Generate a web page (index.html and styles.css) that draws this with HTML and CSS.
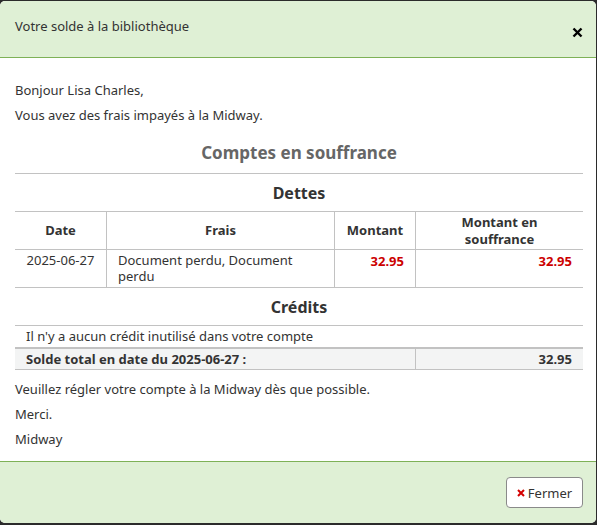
FILE: index.html
```html
<!DOCTYPE html>
<html lang="fr">
<head>
<meta charset="utf-8">
<title>Votre solde</title>
<link rel="stylesheet" href="styles.css">
</head>
<body>
<div class="modal">
  <div class="modal-header">
    <h1 class="modal-title">Votre solde à la bibliothèque</h1>
    <button class="close" type="button" aria-label="Fermer">
      <svg width="11" height="11" viewBox="0 0 11 11"><path d="M1.5 1.5 L9.5 9.5 M9.5 1.5 L1.5 9.5" stroke="#000" stroke-width="2.4" stroke-linecap="butt"/></svg>
    </button>
  </div>
  <div class="modal-body">
    <p>Bonjour Lisa Charles,</p>
    <p>Vous avez des frais impayés à la Midway.</p>
    <h2 class="accounts-title">Comptes en souffrance</h2>
    <table class="fines">
      <tr><th colspan="4" class="section">Dettes</th></tr>
      <tr class="head">
        <th class="c-date">Date</th>
        <th class="c-frais">Frais</th>
        <th class="c-amt">Montant</th>
        <th class="c-out">Montant en<br>souffrance</th>
      </tr>
      <tr class="data">
        <td class="center">2025-06-27</td>
        <td>Document perdu, Document perdu</td>
        <td class="amount debit">32.95</td>
        <td class="amount debit">32.95</td>
      </tr>
      <tr><th colspan="4" class="section">Crédits</th></tr>
      <tr class="note"><td colspan="4">Il n'y a aucun crédit inutilisé dans votre compte</td></tr>
      <tr class="total">
        <td colspan="3">Solde total en date du 2025-06-27 :</td>
        <td class="amount">32.95</td>
      </tr>
    </table>
    <p class="after">Veuillez régler votre compte à la Midway dès que possible.</p>
    <p>Merci.</p>
    <p>Midway</p>
  </div>
  <div class="modal-footer">
    <button class="btn" type="button"><svg class="x" width="8" height="8" viewBox="0 0 8 8"><path d="M1 1 L7 7 M7 1 L1 7" stroke="#d40000" stroke-width="2"/></svg>Fermer</button>
  </div>
</div>
</body>
</html>
```
FILE: styles.css
```css
html, body {
  margin: 0;
  padding: 0;
  background: #2b2b2b;
}
body {
  font-family: "Noto Sans", "Open Sans", sans-serif;
  font-size: 13px;
  color: #333;
  padding: 1px 1px 2px 0;
}
.modal {
  background: #fff;
  border-radius: 5px;
  overflow: hidden;
  height: 522px;
  display: flex;
  flex-direction: column;
}
.modal-header {
  background: #dff0d5;
  border-bottom: 1px solid #7eb157;
  height: 56px;
  display: flex;
  align-items: flex-start;
  justify-content: space-between;
  padding: 0 15px;
}
.modal-title {
  font-size: 13px;
  font-weight: normal;
  margin: 16px 0 0;
  line-height: 18px;
}
.close {
  border: 0;
  background: none;
  padding: 0;
  margin: 26px -2px 0 0;
  width: 11px;
  height: 11px;
  display: flex;
}
.modal-body {
  flex: 1;
  padding: 23px 13px 0 15px;
}
.modal-body p {
  margin: 0 0 7px;
  line-height: 18px;
}
.accounts-title {
  text-align: center;
  color: #666;
  font-size: 17px;
  font-weight: bold;
  margin: 17px 0 8px;
  line-height: 24px;
}
.fines {
  width: 100%;
  border-collapse: collapse;
  margin-bottom: 10px;
}
.fines th, .fines td {
  border: 1px solid #c2c2c2;
  line-height: 16px;
}
.fines tr > :first-child { border-left: 0; }
.fines tr > :last-child { border-right: 0; }
.fines th.section {
  font-size: 16px;
  height: 37px;
  padding: 0;
  text-align: center;
  line-height: 20px;
}
.head th {
  height: 37px;
  padding: 0 8px;
  text-align: center;
  line-height: 17px;
}
.c-date { width: 75px; }
.c-amt { width: 64px; }
.c-out { width: 151px; }
.data td {
  height: 33px;
  padding: 2px 11px 1px;
  vertical-align: top;
}
.data td.center { text-align: center; padding-left: 8px; padding-right: 8px; }
.amount { text-align: right; font-weight: bold; }
.data td.amount { padding-right: 11px; padding-top: 3px; }
.debit { color: #cc0000; }
.note td {
  padding: 2px 11px 3px;
  height: 16px;
}
.total td {
  background: #f3f4f4;
  border-top: 2px solid #c2c2c2;
  font-weight: bold;
  padding: 2px 11px 2px;
  height: 16px;
}
.after { margin-top: 0; }
.modal-footer {
  background: #dff0d5;
  border-top: 1px solid #7eb157;
  height: 61px;
  display: flex;
  align-items: flex-start;
  justify-content: flex-end;
  padding: 0 13px 0 0;
}
.btn {
  margin-top: 15px;
  height: 31px;
  width: 77px;
  background: #fff;
  border: 1px solid #8a8a8a;
  border-radius: 4px;
  font-family: inherit;
  font-size: 13px;
  color: #333;
  display: flex;
  align-items: center;
  justify-content: center;
  padding: 0;
}
.x {
  margin-right: 3px;
  flex: none;
}
```
